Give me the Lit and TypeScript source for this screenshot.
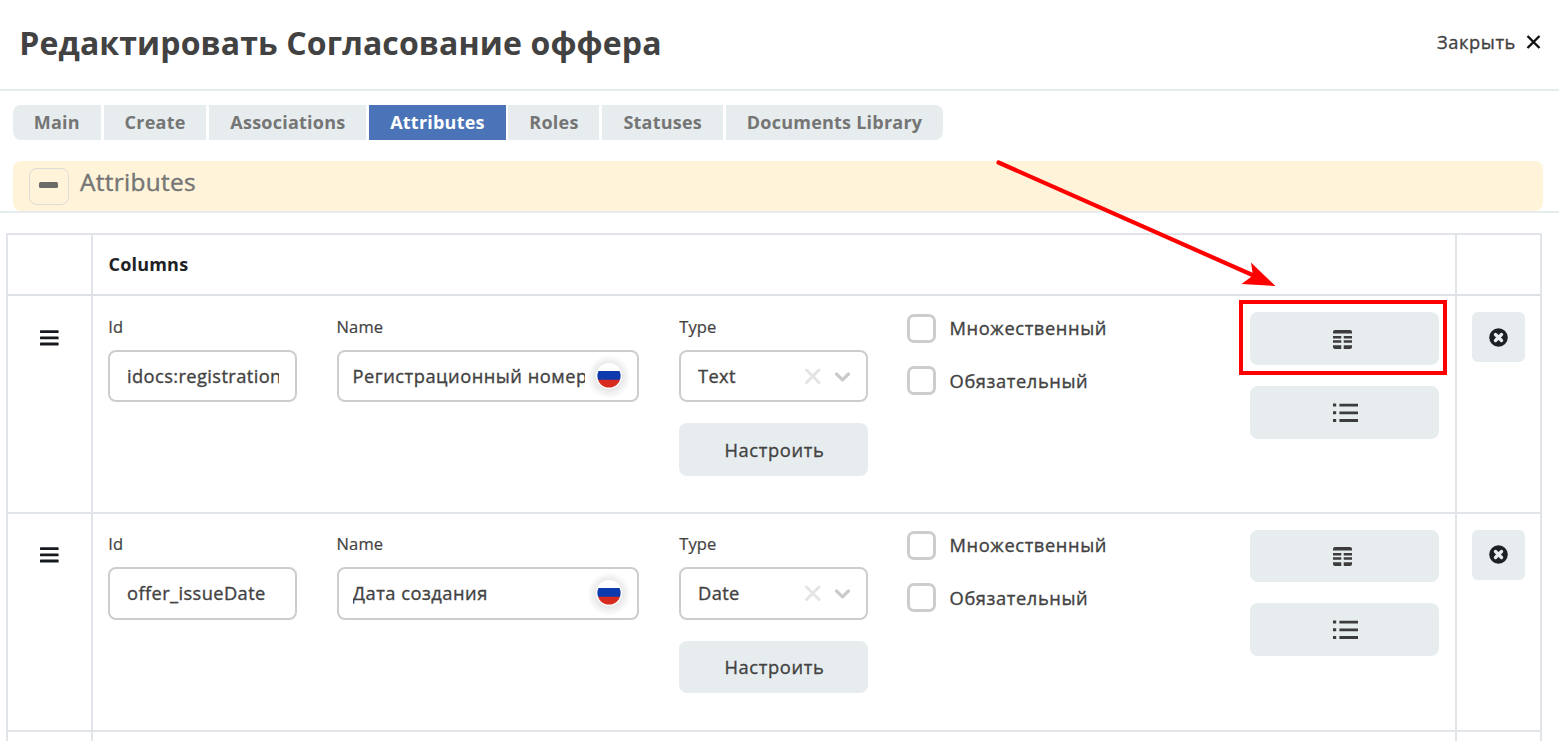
import { LitElement, html, css, svg } from "lit";
import { customElement, property } from "lit/decorators.js";
import { classMap } from "lit/directives/class-map.js";

interface Attribute {
  id: string;
  name: string;
  type: string;
}

const TABS: { label: string; width: number }[] = [
  { label: "Main", width: 88.3 },
  { label: "Create", width: 102.8 },
  { label: "Associations", width: 157.2 },
  { label: "Attributes", width: 136.4 },
  { label: "Roles", width: 91 },
  { label: "Statuses", width: 120.9 },
  { label: "Documents Library", width: 217.2 },
];

const ROWS: Attribute[] = [
  { id: "idocs:registrationNumber", name: "Регистрационный номер", type: "Text" },
  { id: "offer_issueDate", name: "Дата создания", type: "Date" },
];

const gridIcon = svg`
  <svg class="icon" width="19" height="19" viewBox="0 0 19 19" fill="#3c3c3c">
    <path d="M2 0H17Q19 0 19 2V3.6H0V2Q0 0 2 0Z"/>
    <path d="M0 6h8.300v2.500H0zM10.700 6H19v2.500h-8.300zM0 10.200h8.300v2.600H0zM10.700 10.200H19v2.600h-8.300z"/>
    <path d="M0 15.200h8.300V19H2Q0 19 0 17zM10.700 15.200H19V17Q19 19 17 19h-6.300z"/>
  </svg>`;

const listIcon = svg`
  <svg class="icon" width="25" height="20" viewBox="0 0 25 20" fill="#3c3c3c">
    <path d="M0 .6h3.200v3H0zM0 8.300h3.200v3H0zM0 16h3.200v3H0z"/>
    <path d="M6.400 .7H25v2.800H6.400zM6.400 8.400H25v2.800H6.400zM6.400 16.100H25v2.800H6.400z"/>
  </svg>`;

@customElement("attribute-row")
class AttributeRow extends LitElement {
  @property({ attribute: false }) item!: Attribute;

  static styles = css`
    :host {
      display: grid;
      grid-template-columns: 83px 2px 1362px 2px 83px;
      height: 100%;
    }
    .line { background: #e1e5e9; }
    .handle, .main, .side { padding-top: var(--row-pad, 16px); }
    .handle { padding-left: 32px; }
    .handle svg { display: block; margin-top: 17.500px; }
    .main {
      display: grid;
      grid-template-columns: 188.500px 302.900px 188.300px 302.700px 189px;
      column-gap: 39.800px;
      padding-left: 15.300px;
      align-items: start;
    }
    .label {
      font-size: 16.500px;
      line-height: 24px;
      height: 24px;
      margin: 2.500px 0 11px;
      letter-spacing: .1px;
      -webkit-text-stroke: .2px;
    }
    .box {
      box-sizing: border-box;
      height: 52.500px;
      border: 2px solid #cdcdcd;
      border-radius: 8px;
      display: flex;
      align-items: center;
      background: #fff;
    }
    .clip, .check, .btn { font-size: 18.300px; -webkit-text-stroke: .35px; }
    .id { padding: 0 16px 0 16.700px; }
    .name { padding: 0 0 0 14px; }
    .select { padding: 0 15.500px 0 16.700px; }
    .clip { overflow: hidden; white-space: nowrap; flex: 1; line-height: 30px; letter-spacing: .4px; }
    .name .clip { flex: none; width: 232px; letter-spacing: .5px; }
    .flag { display: block; flex: none; margin-left: 1.900px; overflow: visible; }
    .btn {
      box-sizing: border-box;
      height: 52.500px;
      border-radius: 8px;
      background: #e7edef;
      display: flex;
      align-items: center;
      justify-content: center;
      letter-spacing: .65px;
    }
    .setup { margin-top: 21px; padding: 0 0 1px 2px; }
    .checks { display: grid; row-gap: 23.500px; padding-top: 1.300px; }
    .check { display: flex; align-items: center; gap: 13.200px; height: 29px; letter-spacing: .6px; }
    .check span:last-child { margin-top: -1px; }
    .tick { box-sizing: border-box; width: 29px; height: 29px; border: 3px solid #cdcdcd; border-radius: 7px; }
    .actions { display: grid; row-gap: 21.300px; }
    .actions .btn { justify-content: flex-start; padding: 1px 0 0 83px; }
    .side { padding-left: 15px; }
    .remove { width: 53px; height: 50px; border-radius: 6px; background: #e7edef; display: flex; align-items: center; justify-content: center; }
  `;

  render() {
    const { id, name, type } = this.item;
    return html`
      <div class="handle">
        <svg width="19" height="16" viewBox="0 0 19 16" fill="#161a1f">
          <rect width="18.600" height="2.900" y=".2" rx=".6"/><rect width="18.600" height="2.900" y="6.400" rx=".6"/><rect width="18.600" height="2.900" y="12.600" rx=".6"/>
        </svg>
      </div>
      <div class="line"></div>
      <div class="main">
        <div>
          <div class="label">Id</div>
          <div class="box id"><div class="clip">${id}</div></div>
        </div>
        <div>
          <div class="label">Name</div>
          <div class="box name">
            <div class="clip">${name}</div>
            <svg class="flag" width="46" height="46" viewBox="-23 -23 46 46">
              <defs>
                <clipPath id="disc"><circle r="11.600"/></clipPath>
                <radialGradient id="halo"><stop offset=".5" stop-color="#000" stop-opacity=".11"/><stop offset="1" stop-color="#000" stop-opacity="0"/></radialGradient>
              </defs>
              <circle r="22" cy="1" fill="url(#halo)"/>
              <circle r="13" fill="#fff"/>
              <g clip-path="url(#disc)">
                <path d="M-12-5h24V4h-24z" fill="#0d3bad"/><path d="M-12 3.800h24V12h-24z" fill="#d82b20"/>
              </g>
            </svg>
          </div>
        </div>
        <div>
          <div class="label">Type</div>
          <div class="box select">
            <div class="clip">${type}</div>
            <svg width="46" height="18" viewBox="0 0 46 18" fill="none" stroke-width="3" stroke-linecap="round" stroke-linejoin="round">
              <path d="M2.500 3l12.500 12.500M15 3L2.500 15.500" stroke="#e4e4e4"/>
              <path d="M32.500 7l6 5.800 6-5.800" stroke="#cacaca" stroke-width="3.200"/>
            </svg>
          </div>
          <div class="btn setup">Настроить</div>
        </div>
        <div class="checks">
          <div class="check"><span class="tick"></span><span>Множественный</span></div>
          <div class="check"><span class="tick"></span><span>Обязательный</span></div>
        </div>
        <div class="actions">
          <div class="btn">${gridIcon}</div>
          <div class="btn">${listIcon}</div>
        </div>
      </div>
      <div class="line"></div>
      <div class="side">
        <div class="remove">
          <svg width="19" height="19" viewBox="0 0 19 19">
            <circle cx="9.500" cy="9.500" r="9.300" fill="#1d2126"/>
            <path d="M6.500 6.500l6 6M12.500 6.500l-6 6" stroke="#e9eef0" stroke-width="3.400" stroke-linecap="round"/>
          </svg>
        </div>
      </div>`;
  }
}

@customElement("app-root")
class AppRoot extends LitElement {
  static styles = css`
    :host {
      display: block;
      position: relative;
      width: 1559px;
      height: 741px;
      overflow: hidden;
      background: #fff;
      color: #424242;
      font-family: "Open Sans", "Noto Sans", sans-serif;
    }
    .header {
      box-sizing: border-box;
      height: 91px;
      border-bottom: 2px solid #e7ecef;
      display: flex;
      justify-content: space-between;
      padding: 0 18px 0 19.300px;
      white-space: nowrap;
    }
    .title { margin: 0; font-size: 32px; font-weight: 700; line-height: 44px; padding-top: 21px; letter-spacing: .12px; }
    .close { display: flex; gap: 10px; height: 26px; line-height: 26px; padding-top: 29px; font-size: 18.300px; letter-spacing: .6px; -webkit-text-stroke: .35px; }
    .close svg { margin-top: 6px; }
    .tabs { display: flex; gap: 2.800px; padding: 14px 0 0 12.600px; }
    .tab {
      box-sizing: border-box;
      height: 35px;
      background: #e7edef;
      color: #757575;
      font-size: 18px;
      font-weight: 700;
      letter-spacing: .23px;
      line-height: 35px;
      text-align: center;
      white-space: nowrap;
    }
    .tab:first-child { border-radius: 8px 0 0 8px; }
    .tab:last-child { border-radius: 0 8px 8px 0; }
    .active { background: #4a73b8; color: #fff; }
    .section { margin-top: 21px; border-bottom: 2px solid #e7ecef; padding: 0 16px 0 13px; }
    .banner { box-sizing: border-box; height: 50px; border-radius: 8px; background: #fff4d9; display: flex; padding: 7px 0 0 15.500px; gap: 11.500px; }
    .fold { box-sizing: border-box; width: 40px; height: 36.500px; border: 1px solid #dddcd6; border-radius: 8px; display: flex; align-items: center; justify-content: center; padding: 0 1px 2px 0; }
    .fold span { width: 19px; height: 6px; border-radius: 1.500px; background: #6a6a66; }
    .banner h2 { margin: 0; font-size: 24.400px; font-weight: 400; line-height: 27px; letter-spacing: .3px; color: #757575; -webkit-text-stroke: .4px; }
    .table { margin: 20px 0 0 6px; width: 1536px; box-sizing: border-box; border: 2px solid #e1e5e9; border-bottom: 0; }
    .head { display: grid; grid-template-columns: 83px 2px 1362px 2px 83px; height: 59px; border-bottom: 2px solid #dde1e5; }
    .line { background: #e1e5e9; }
    .columns { padding-left: 15.500px; line-height: 58px; font-size: 18px; font-weight: 700; color: #1d2126; letter-spacing: .2px; }
    .row { --row-pad: 15.400px; box-sizing: border-box; height: 217.400px; border-bottom: 2px solid #e1e5e9; }
    .row.first { --row-pad: 16.400px; height: 218.200px; }
    .tail { height: 10px; display: grid; grid-template-columns: 83px 2px 1362px 2px 83px; }
    .marks { position: absolute; inset: 0; pointer-events: none; }
  `;

  render() {
    return html`
      <div class="header">
        <h1 class="title">Редактировать Согласование оффера</h1>
        <div class="close"><span>Закрыть</span>
          <svg width="15" height="15" viewBox="0 0 15 15" fill="none" stroke="#111" stroke-width="2.400"><path d="M1.500 1l12 12M13.500 1l-12 12"/></svg>
        </div>
      </div>
      <div class="tabs">
        ${TABS.map((t) => html`<div class=${classMap({ tab: true, active: t.label === "Attributes" })} style="width:${t.width}px">${t.label}</div>`)}
      </div>
      <div class="section">
        <div class="banner"><div class="fold"><span></span></div><h2>Attributes</h2></div>
      </div>
      <div class="table">
        <div class="head"><div></div><div class="line"></div><div class="columns">Columns</div><div class="line"></div><div></div></div>
        ${ROWS.map((r, i) => html`<div class=${classMap({ row: true, first: i === 0 })}><attribute-row .item=${r}></attribute-row></div>`)}
        <div class="tail"><div></div><div class="line"></div><div></div><div class="line"></div><div></div></div>
      </div>
      <svg class="marks" width="1559" height="741" viewBox="0 0 1559 741">
        <path d="M998.500 162.500L1257 277" stroke="#f00" stroke-width="4.200" stroke-linecap="round"/>
        <path d="M1275.500 286L1251 262.500L1253 275.500L1241.500 284Z" fill="#f00"/>
        <rect x="1241" y="302" width="204" height="71" fill="none" stroke="#f00" stroke-width="4"/>
      </svg>`;
  }
}
